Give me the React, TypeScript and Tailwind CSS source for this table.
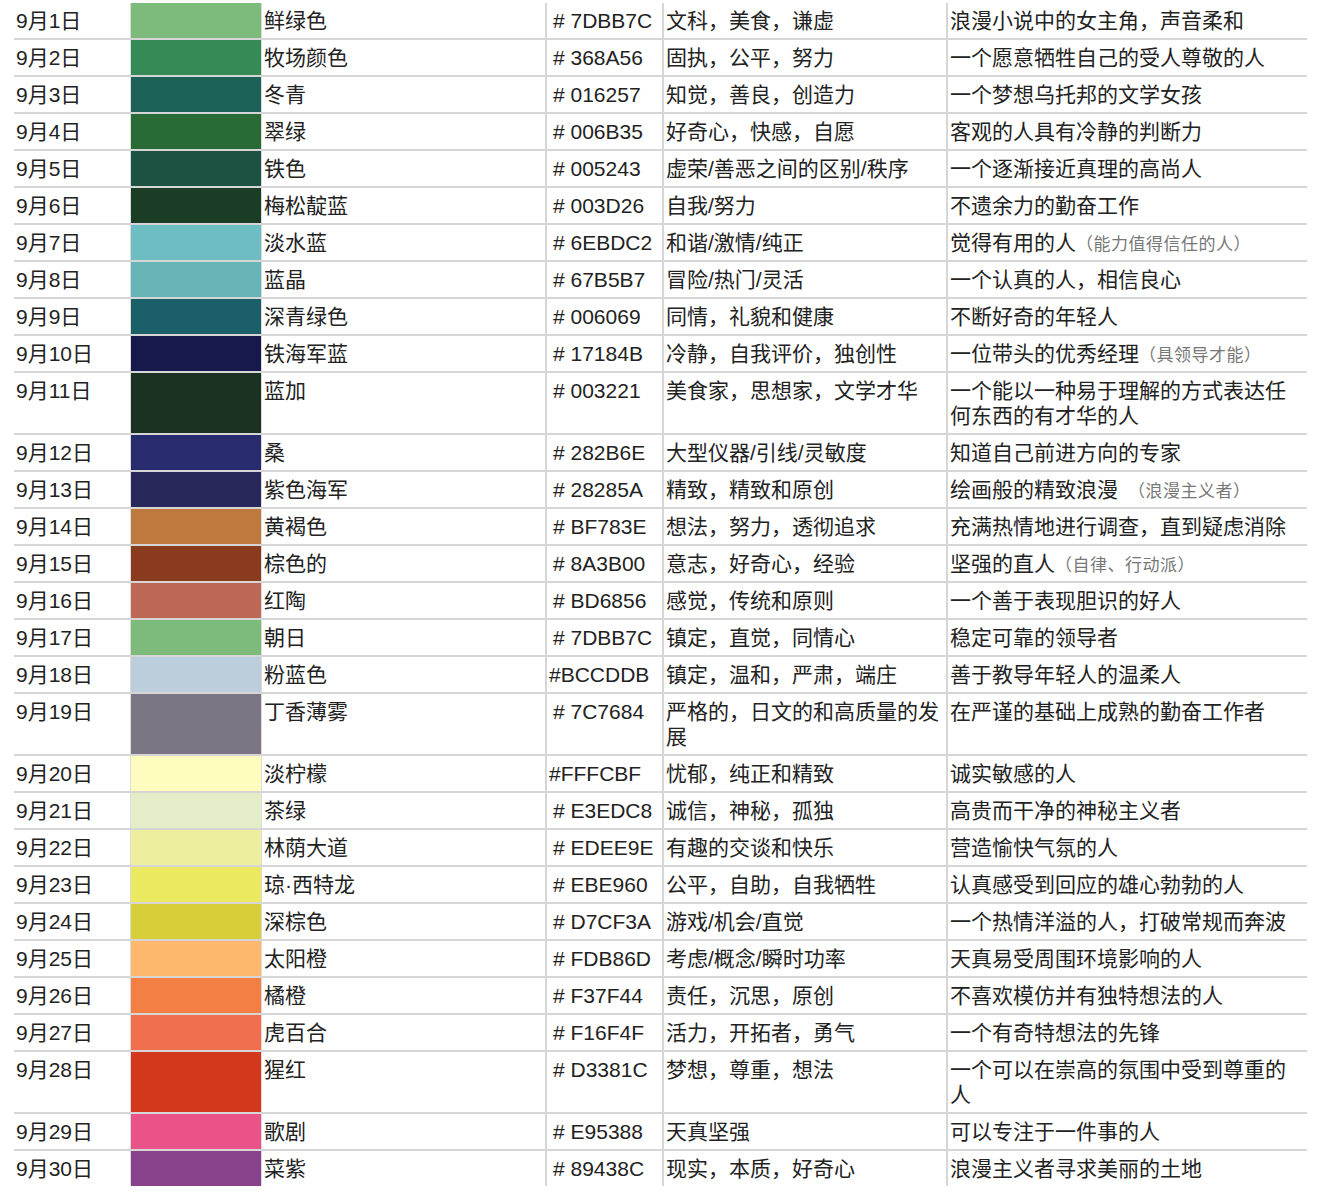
type ColorRow = {
  date: string;
  swatch: string;
  name: string;
  hex: string;
  spaced: boolean;
  traits: string;
  person: string;
  note?: string;
  noteGap?: boolean;
};

const rows: ColorRow[] = [
  { date: "9月1日", swatch: "#7DBB7C", name: "鲜绿色", hex: "7DBB7C", spaced: true, traits: "文科，美食，谦虚", person: "浪漫小说中的女主角，声音柔和" },
  { date: "9月2日", swatch: "#368A56", name: "牧场颜色", hex: "368A56", spaced: true, traits: "固执，公平，努力", person: "一个愿意牺牲自己的受人尊敬的人" },
  { date: "9月3日", swatch: "#1B6157", name: "冬青", hex: "016257", spaced: true, traits: "知觉，善良，创造力", person: "一个梦想乌托邦的文学女孩" },
  { date: "9月4日", swatch: "#296B36", name: "翠绿", hex: "006B35", spaced: true, traits: "好奇心，快感，自愿", person: "客观的人具有冷静的判断力" },
  { date: "9月5日", swatch: "#1D5243", name: "铁色", hex: "005243", spaced: true, traits: "虚荣/善恶之间的区别/秩序", person: "一个逐渐接近真理的高尚人" },
  { date: "9月6日", swatch: "#1B3D26", name: "梅松靛蓝", hex: "003D26", spaced: true, traits: "自我/努力", person: "不遗余力的勤奋工作" },
  { date: "9月7日", swatch: "#6EBDC2", name: "淡水蓝", hex: "6EBDC2", spaced: true, traits: "和谐/激情/纯正", person: "觉得有用的人", note: "（能力值得信任的人）" },
  { date: "9月8日", swatch: "#67B5B7", name: "蓝晶", hex: "67B5B7", spaced: true, traits: "冒险/热门/灵活", person: "一个认真的人，相信良心" },
  { date: "9月9日", swatch: "#1B6069", name: "深青绿色", hex: "006069", spaced: true, traits: "同情，礼貌和健康", person: "不断好奇的年轻人" },
  { date: "9月10日", swatch: "#17184B", name: "铁海军蓝", hex: "17184B", spaced: true, traits: "冷静，自我评价，独创性", person: "一位带头的优秀经理", note: "（具领导才能）" },
  { date: "9月11日", swatch: "#1B3222", name: "蓝加", hex: "003221", spaced: true, traits: "美食家，思想家，文学才华", person: "一个能以一种易于理解的方式表达任何东西的有才华的人" },
  { date: "9月12日", swatch: "#282B6E", name: "桑", hex: "282B6E", spaced: true, traits: "大型仪器/引线/灵敏度", person: "知道自己前进方向的专家" },
  { date: "9月13日", swatch: "#28285A", name: "紫色海军", hex: "28285A", spaced: true, traits: "精致，精致和原创", person: "绘画般的精致浪漫", note: "（浪漫主义者）", noteGap: true },
  { date: "9月14日", swatch: "#BF783E", name: "黄褐色", hex: "BF783E", spaced: true, traits: "想法，努力，透彻追求", person: "充满热情地进行调查，直到疑虑消除" },
  { date: "9月15日", swatch: "#8A3B1E", name: "棕色的", hex: "8A3B00", spaced: true, traits: "意志，好奇心，经验", person: "坚强的直人", note: "（自律、行动派）" },
  { date: "9月16日", swatch: "#BD6856", name: "红陶", hex: "BD6856", spaced: true, traits: "感觉，传统和原则", person: "一个善于表现胆识的好人" },
  { date: "9月17日", swatch: "#7DBB7C", name: "朝日", hex: "7DBB7C", spaced: true, traits: "镇定，直觉，同情心", person: "稳定可靠的领导者" },
  { date: "9月18日", swatch: "#BCCDDB", name: "粉蓝色", hex: "BCCDDB", spaced: false, traits: "镇定，温和，严肃，端庄", person: "善于教导年轻人的温柔人" },
  { date: "9月19日", swatch: "#7C7684", name: "丁香薄雾", hex: "7C7684", spaced: true, traits: "严格的，日文的和高质量的发展", person: "在严谨的基础上成熟的勤奋工作者" },
  { date: "9月20日", swatch: "#FFFCBF", name: "淡柠檬", hex: "FFFCBF", spaced: false, traits: "忧郁，纯正和精致", person: "诚实敏感的人" },
  { date: "9月21日", swatch: "#E3EDC8", name: "茶绿", hex: "E3EDC8", spaced: true, traits: "诚信，神秘，孤独", person: "高贵而干净的神秘主义者" },
  { date: "9月22日", swatch: "#EDEE9E", name: "林荫大道", hex: "EDEE9E", spaced: true, traits: "有趣的交谈和快乐", person: "营造愉快气氛的人" },
  { date: "9月23日", swatch: "#EBE960", name: "琼·西特龙", hex: "EBE960", spaced: true, traits: "公平，自助，自我牺牲", person: "认真感受到回应的雄心勃勃的人" },
  { date: "9月24日", swatch: "#D7CF3A", name: "深棕色", hex: "D7CF3A", spaced: true, traits: "游戏/机会/直觉", person: "一个热情洋溢的人，打破常规而奔波" },
  { date: "9月25日", swatch: "#FDB86D", name: "太阳橙", hex: "FDB86D", spaced: true, traits: "考虑/概念/瞬时功率", person: "天真易受周围环境影响的人" },
  { date: "9月26日", swatch: "#F37F44", name: "橘橙", hex: "F37F44", spaced: true, traits: "责任，沉思，原创", person: "不喜欢模仿并有独特想法的人" },
  { date: "9月27日", swatch: "#F16F4F", name: "虎百合", hex: "F16F4F", spaced: true, traits: "活力，开拓者，勇气", person: "一个有奇特想法的先锋" },
  { date: "9月28日", swatch: "#D3381C", name: "猩红", hex: "D3381C", spaced: true, traits: "梦想，尊重，想法", person: "一个可以在崇高的氛围中受到尊重的人" },
  { date: "9月29日", swatch: "#E95388", name: "歌剧", hex: "E95388", spaced: true, traits: "天真坚强", person: "可以专注于一件事的人" },
  { date: "9月30日", swatch: "#89438C", name: "菜紫", hex: "89438C", spaced: true, traits: "现实，本质，好奇心", person: "浪漫主义者寻求美丽的土地" },
];

function HexCell({ hex, spaced }: { hex: string; spaced: boolean }) {
  if (!spaced) return <span>#{hex}</span>;
  return <span className="ml-1"># {hex}</span>;
}

function BirthColorRow({ row, last }: { row: ColorRow; last: boolean }) {
  return (
    <div
      className={
        last
          ? "grid h-[35px] grid-cols-[116px_132px_283px_117px_284px_361px]"
          : "grid min-h-[37px] grid-cols-[116px_132px_283px_117px_284px_361px] border-b-2 border-[#d6d6d6]"
      }
    >
      <div className="py-[5px] pl-[2px]">{row.date}</div>
      <div className="border-x border-[#dcdcdc]" style={{ backgroundColor: row.swatch }} />
      <div className="py-[5px] pl-[2px]">{row.name}</div>
      <div className="border-l-2 border-[#d6d6d6] py-[5px] pl-[2px] whitespace-pre">
        <HexCell hex={row.hex} spaced={row.spaced} />
      </div>
      <div className="border-l-2 border-[#d6d6d6] py-[5px] pl-[2px] pr-[6px]">{row.traits}</div>
      <div className="border-l-2 border-[#d6d6d6] py-[5px] pl-[2px] pr-[8px]">
        {row.person}
        {row.note && (
          <span
            className={
              row.noteGap
                ? "ml-[10px] text-[17px] leading-[17px] tracking-[0.5px] text-[#777]"
                : "text-[17px] leading-[17px] tracking-[0.5px] text-[#777]"
            }
          >
            {row.note}
          </span>
        )}
      </div>
    </div>
  );
}

export default function App() {
  return (
    <div className="min-h-[1198px] bg-white pt-[3px] pl-[14px] font-['Liberation_Sans','Noto_Sans_CJK_SC',sans-serif] text-[21px] leading-[25px] text-[#222]">
      <div className="w-[1293px]">
        {rows.map((row, i) => (
          <BirthColorRow key={row.date} row={row} last={i === rows.length - 1} />
        ))}
      </div>
    </div>
  );
}
